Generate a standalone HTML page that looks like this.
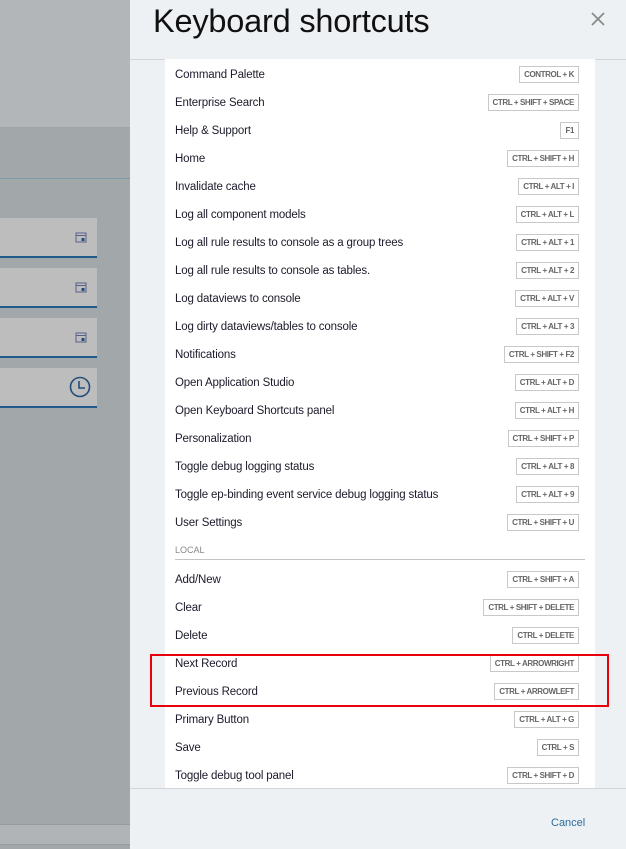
<!DOCTYPE html>
<html><head><meta charset="utf-8"><style>
*{margin:0;padding:0;box-sizing:border-box}
body{width:626px;height:849px;overflow:hidden;position:relative;font-family:"Liberation Sans",sans-serif;background:#a2a8aa}
.a{position:absolute}
.inp{position:absolute;left:0;width:97px;height:40px;background:#bdbdbd;border-bottom:2px solid #1f5a8a}
.panel{position:absolute;left:130px;top:0;width:496px;height:849px;background:#eef1f4}
.list{position:absolute;left:165px;top:59px;width:430px;height:729px;background:#fff}
.row{position:absolute;left:175px;font-size:11.5px;color:#1b1b2b;line-height:14px;letter-spacing:-0.15px}
.k{position:absolute;right:47px;height:17px;border:1px solid #c8c8c8;font-size:8px;font-weight:bold;color:#666;line-height:15px;padding:0 4px;letter-spacing:-0.4px;white-space:nowrap;background:#fff}
</style></head><body>
<div class="a" style="left:0;top:0;width:130px;height:128px;background:#b3b6b8;border-bottom:1px solid #9ea4a6"></div>
<div class="a" style="left:0;top:178px;width:130px;height:1px;background:#7f9aa8"></div>
<div class="inp" style="top:218px"></div>
<div class="inp" style="top:268px"></div>
<div class="inp" style="top:318px"></div>
<div class="inp" style="top:368px"></div>
<svg class="a" style="left:75px;top:231px" width="12" height="12" viewBox="0 0 12 12"><rect x="1" y="2" width="10" height="9" fill="none" stroke="#5a5f8a" stroke-width="1"/><line x1="1" y1="4.5" x2="11" y2="4.5" stroke="#5a5f8a"/><rect x="6.5" y="7" width="3" height="3" fill="#1f4f7a"/></svg>
<svg class="a" style="left:75px;top:281px" width="12" height="12" viewBox="0 0 12 12"><rect x="1" y="2" width="10" height="9" fill="none" stroke="#5a5f8a" stroke-width="1"/><line x1="1" y1="4.5" x2="11" y2="4.5" stroke="#5a5f8a"/><rect x="6.5" y="7" width="3" height="3" fill="#1f4f7a"/></svg>
<svg class="a" style="left:75px;top:331px" width="12" height="12" viewBox="0 0 12 12"><rect x="1" y="2" width="10" height="9" fill="none" stroke="#5a5f8a" stroke-width="1"/><line x1="1" y1="4.5" x2="11" y2="4.5" stroke="#5a5f8a"/><rect x="6.5" y="7" width="3" height="3" fill="#1f4f7a"/></svg>
<svg class="a" style="left:69px;top:376px" width="22" height="22" viewBox="0 0 22 22"><circle cx="11" cy="11" r="9.5" fill="none" stroke="#1f4f7a" stroke-width="1.6"/><path d="M10 5v7h6" fill="none" stroke="#1f4f7a" stroke-width="1.6"/></svg>
<div class="a" style="left:0;top:824px;width:130px;height:21px;background:#b1b4b6;border-top:1px solid #959b9d;border-bottom:1px solid #959b9d"></div>

<div class="panel"></div>
<div class="a" style="left:153px;top:3px;font-size:32.5px;color:#111;letter-spacing:-0.2px">Keyboard shortcuts</div>
<svg class="a" style="left:590px;top:11px" width="16" height="16" viewBox="0 0 16 16"><path d="M2 2L14 14M14 2L2 14" stroke="#8a8a8a" stroke-width="1.8"/></svg>
<div class="a" style="left:130px;top:59px;width:496px;height:1px;background:#d0d4d8"></div>
<div class="list"></div>
<div class="a" style="left:130px;top:788px;width:496px;height:1px;background:#d0d4d8"></div>
<div class="a" style="left:551px;top:817px;font-size:11px;color:#2b6d9e">Cancel</div>

<div class="row" style="top:68px">Command Palette</div><div class="k" style="top:66px">CONTROL + K</div>
<div class="row" style="top:96px">Enterprise Search</div><div class="k" style="top:94px">CTRL + SHIFT + SPACE</div>
<div class="row" style="top:124px">Help &amp; Support</div><div class="k" style="top:122px">F1</div>
<div class="row" style="top:152px">Home</div><div class="k" style="top:150px">CTRL + SHIFT + H</div>
<div class="row" style="top:180px">Invalidate cache</div><div class="k" style="top:178px">CTRL + ALT + I</div>
<div class="row" style="top:208px">Log all component models</div><div class="k" style="top:206px">CTRL + ALT + L</div>
<div class="row" style="top:236px">Log all rule results to console as a group trees</div><div class="k" style="top:234px">CTRL + ALT + 1</div>
<div class="row" style="top:264px">Log all rule results to console as tables.</div><div class="k" style="top:262px">CTRL + ALT + 2</div>
<div class="row" style="top:292px">Log dataviews to console</div><div class="k" style="top:290px">CTRL + ALT + V</div>
<div class="row" style="top:320px">Log dirty dataviews/tables to console</div><div class="k" style="top:318px">CTRL + ALT + 3</div>
<div class="row" style="top:348px">Notifications</div><div class="k" style="top:346px">CTRL + SHIFT + F2</div>
<div class="row" style="top:376px">Open Application Studio</div><div class="k" style="top:374px">CTRL + ALT + D</div>
<div class="row" style="top:404px">Open Keyboard Shortcuts panel</div><div class="k" style="top:402px">CTRL + ALT + H</div>
<div class="row" style="top:432px">Personalization</div><div class="k" style="top:430px">CTRL + SHIFT + P</div>
<div class="row" style="top:460px">Toggle debug logging status</div><div class="k" style="top:458px">CTRL + ALT + 8</div>
<div class="row" style="top:488px">Toggle ep-binding event service debug logging status</div><div class="k" style="top:486px">CTRL + ALT + 9</div>
<div class="row" style="top:516px">User Settings</div><div class="k" style="top:514px">CTRL + SHIFT + U</div>
<div class="a" style="left:175px;top:545px;font-size:9px;color:#888">LOCAL</div>
<div class="a" style="left:175px;top:559px;width:410px;height:1px;background:#c4c4c4"></div>
<div class="row" style="top:573px">Add/New</div><div class="k" style="top:571px">CTRL + SHIFT + A</div>
<div class="row" style="top:601px">Clear</div><div class="k" style="top:599px">CTRL + SHIFT + DELETE</div>
<div class="row" style="top:629px">Delete</div><div class="k" style="top:627px">CTRL + DELETE</div>
<div class="row" style="top:657px">Next Record</div><div class="k" style="top:655px">CTRL + ARROWRIGHT</div>
<div class="row" style="top:685px">Previous Record</div><div class="k" style="top:683px">CTRL + ARROWLEFT</div>
<div class="row" style="top:713px">Primary Button</div><div class="k" style="top:711px">CTRL + ALT + G</div>
<div class="row" style="top:741px">Save</div><div class="k" style="top:739px">CTRL + S</div>
<div class="row" style="top:769px">Toggle debug tool panel</div><div class="k" style="top:767px">CTRL + SHIFT + D</div>
<div class="a" style="left:150px;top:654px;width:459px;height:53px;border:2px solid #e8000b"></div>
</body></html>
